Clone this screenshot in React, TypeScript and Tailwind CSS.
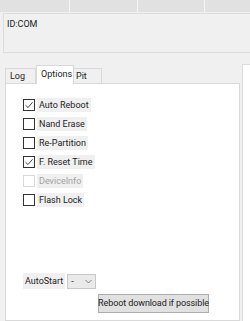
import React from "react";

const CheckIcon = () => (
  <svg width="10" height="10" viewBox="0 0 10 10" fill="none">
    <path d="M1.5 5.2 L4 7.6 L8.6 2.2" stroke="#333" strokeWidth="0.9" />
  </svg>
);

const Option = ({ label, checked, disabled }: { label: string; checked?: boolean; disabled?: boolean }) => (
  <div className="flex items-center h-[19px]">
    <div
      className={`w-[12px] h-[12px] flex items-center justify-center border bg-white ${
        disabled ? "border-[#d9d9d9]" : "border-[#333]"
      }`}
    >
      {checked && <CheckIcon />}
    </div>
    <div className={`ml-[2px] px-[2px] h-[14px] leading-[14px] bg-[#f0f0f0] ${disabled ? "text-[#a0a0a0]" : "text-[#222]"}`}>
      {label}
    </div>
  </div>
);

const App = () => {
  return (
    <div
      className="w-[250px] h-[321px] bg-[#f0f0f0] overflow-hidden flex flex-col text-[9px] whitespace-nowrap"
      style={{ fontFamily: "Roboto, 'Liberation Sans', sans-serif" }}
    >
      <div className="flex h-[12px] shrink-0">
        <div className="w-[70px] bg-[#e1e1e1] border-r border-[#f4f4f4]" />
        <div className="w-[68px] bg-[#e1e1e1] border-r border-[#f4f4f4]" />
        <div className="w-[67px] bg-[#e1e1e1] border-r border-[#f4f4f4]" />
        <div className="flex-1 bg-[#e1e1e1]" />
      </div>
      <div className="ml-[3px] mr-[-4px] mt-[1px] h-[40px] border border-[#dcdcdc] pl-[3px] pt-[4px] text-[#222] shrink-0">
        ID:COM
      </div>
      <div className="flex flex-1 mt-[11px] min-h-0">
        <div className="flex flex-col w-[236px] ml-[5px]">
          <div className="flex items-end h-[19px] shrink-0">
            <div className="w-[31px] h-[15px] border border-b-0 border-[#d9d9d9] bg-[#f0f0f0] pl-[4px] leading-[15px] text-[#222]">
              Log
            </div>
            <div className="w-[38px] h-[19px] border border-b-0 border-[#d9d9d9] bg-white pl-[4px] leading-[17px] text-[#222] -mb-[1px] relative z-10">
              Options
            </div>
            <div className="w-[28px] h-[15px] border border-b-0 border-l-0 border-[#d9d9d9] bg-[#f0f0f0] pl-[2px] leading-[15px] text-[#222]">
              Pit
            </div>
          </div>
          <div className="flex-1 bg-white border border-[#d9d9d9] flex flex-col pl-[17px] pt-[11px]">
            <Option label="Auto Reboot" checked />
            <Option label="Nand Erase" />
            <Option label="Re-Partition" />
            <Option label="F. Reset Time" checked />
            <Option label="DeviceInfo" disabled />
            <Option label="Flash Lock" />
            <div className="flex items-center mt-[64px]">
              <div className="h-[16px] leading-[16px] px-[2px] bg-[#f0f0f0] text-[#222]">AutoStart</div>
              <div className="ml-[2px] w-[29px] h-[15px] border border-[#c8c8c8] bg-[#eaeaea] flex items-center justify-between px-[3px] text-[#222]">
                <span className="leading-[10px]">-</span>
                <svg width="7" height="5" viewBox="0 0 7 5" fill="none">
                  <path d="M0.5 1 L3.5 4 L6.5 1" stroke="#666" strokeWidth="0.8" />
                </svg>
              </div>
            </div>
            <div className="flex mt-[5px] ml-[75px]">
              <div className="w-[111px] h-[19px] border border-[#adadad] bg-[#e1e1e1] flex items-center justify-center text-[#222] tracking-[-0.1px]">
                Reboot download if possible
              </div>
            </div>
          </div>
        </div>
        <div className="ml-[2px] w-[8px] bg-white border-l border-t border-[#dcdcdc]" />
      </div>
    </div>
  );
};

export default App;
